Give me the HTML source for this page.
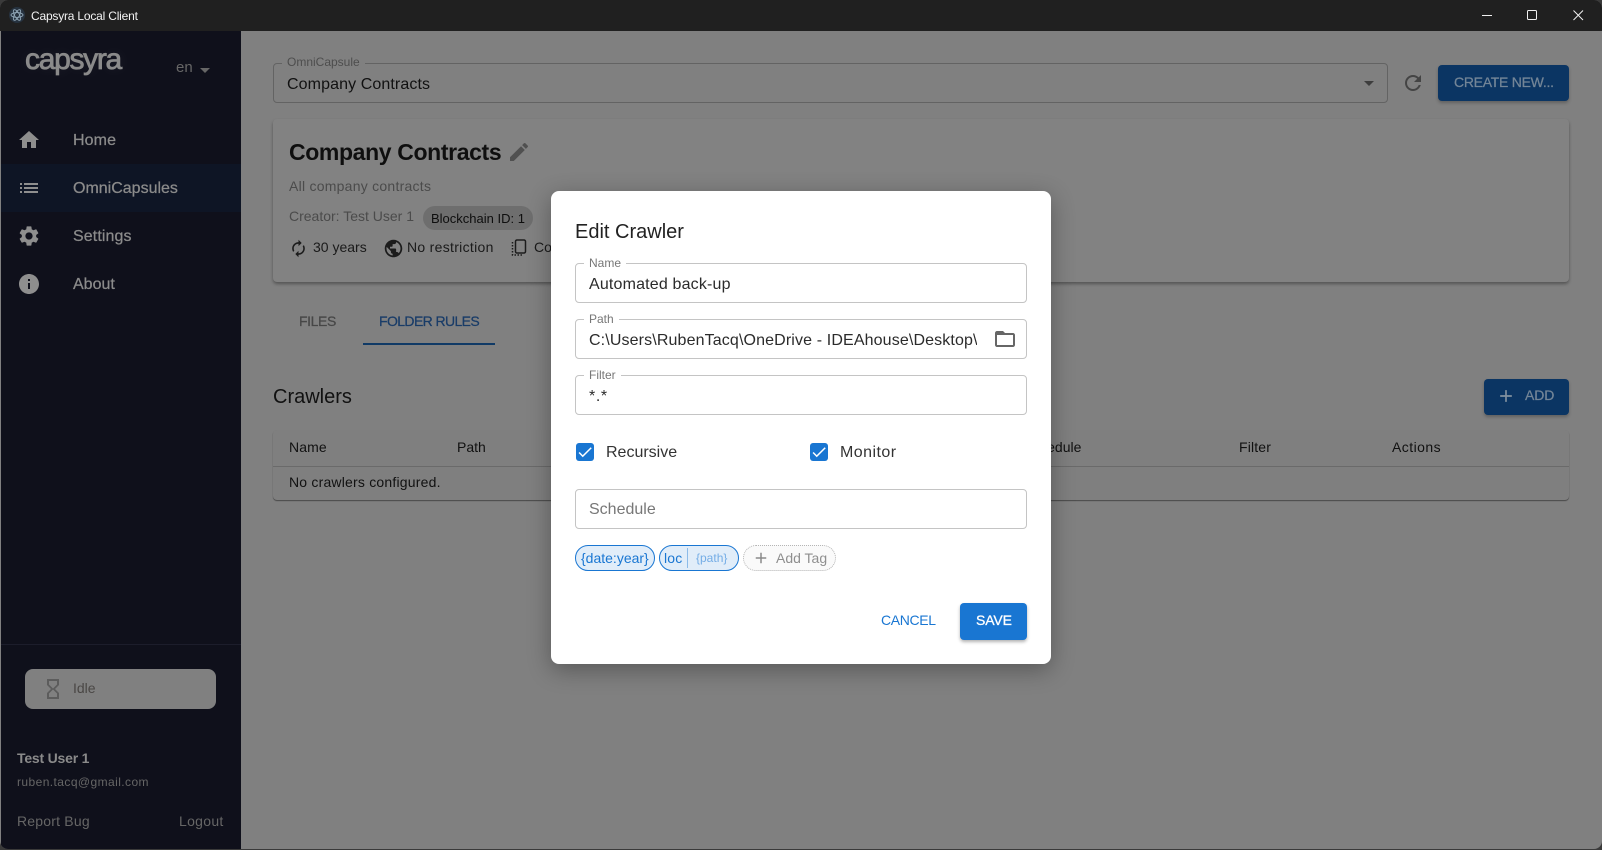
<!DOCTYPE html>
<html lang="en"><head><meta charset="utf-8"><title>Capsyra Local Client</title>
<style>
html,body{margin:0;padding:0;width:1602px;height:850px;overflow:hidden;background:#3a3a3a;font-family:"Liberation Sans",Arial,sans-serif}
#win{position:absolute;left:0;top:0;width:1602px;height:849px;background:#808080;border-radius:8px;overflow:hidden}
.a{position:absolute;white-space:nowrap;line-height:1}
.m{-webkit-text-stroke:.25px currentColor}
svg{position:absolute;display:block}
.box{position:absolute;box-sizing:border-box;border-radius:4px}
.lab{position:absolute;background:#fff;padding:0 5px;font-size:12px;line-height:14px;color:#777;white-space:nowrap}
.fld{left:575px;width:452px;height:40px;border:1px solid #c4c4c4;background:#fff}
</style></head><body>
<div id="win">
<!-- titlebar -->
<div class="box" style="left:0;top:0;width:1602px;height:31px;background:#202020;border-radius:0"></div>
<div class="box" style="left:9px;top:7px;width:16px;height:16px;border-radius:50%;background:#26323f"></div>
<svg style="left:10px;top:8px" width="14" height="14" viewBox="0 0 14 14" fill="none" stroke="#8fa5b5" stroke-width=".9"><ellipse cx="7" cy="7" rx="6" ry="2.4"/><ellipse cx="7" cy="7" rx="6" ry="2.4" transform="rotate(60 7 7)"/><ellipse cx="7" cy="7" rx="6" ry="2.4" transform="rotate(120 7 7)"/></svg>
<div class="a" style="left:31px;top:10px;font-size:12px;color:#f2f2f2;letter-spacing:-.2px">Capsyra Local Client</div>
<svg style="left:1475px;top:5px" width="120" height="20" viewBox="0 0 120 20" fill="none" stroke="#f0f0f0" stroke-width="1"><path d="M7 10.5h10"/><rect x="52.5" y="5.5" width="9" height="9" rx="1"/><path d="M98.5 5.5l9.5 9.5M108 5.5l-9.5 9.500"/></svg>

<!-- sidebar -->
<div class="box" style="left:1px;top:31px;width:240px;height:818px;background:#0f101b;border-radius:0"></div>
<div class="box" style="left:1px;top:164px;width:240px;height:48px;background:#0e1525;border-radius:0"></div>
<div class="box" style="left:1px;top:644px;width:240px;height:1px;background:#1c1d2b;border-radius:0"></div>
<div class="a" style="left:25px;top:45px;font-size:30px;color:#8a8a8a;letter-spacing:-1.3px;-webkit-text-stroke:.8px #8a8a8a;text-shadow:0 0 14px rgba(255,255,255,.1)">capsyra</div>
<div class="a" style="left:176px;top:60px;font-size:15px;color:#666">en</div>
<svg style="left:200px;top:68px" width="10" height="5" viewBox="0 0 10 5"><path d="M0 0h10L5 5z" fill="#666"/></svg>

<svg style="left:17px;top:128px" width="24" height="24" viewBox="0 0 24 24" fill="#8e8e8e"><path d="M10 20v-6h4v6h5v-8h3L12 3 2 12h3v8z"/></svg>
<svg style="left:17px;top:176px" width="24" height="24" viewBox="0 0 24 24" fill="#8e8e8e"><path d="M3 13h2v-2H3v2zm0 4h2v-2H3v2zm0-8h2V7H3v2zm4 4h14v-2H7v2zm0 4h14v-2H7v2zM7 7v2h14V7H7z"/></svg>
<svg style="left:17px;top:224px" width="24" height="24" viewBox="0 0 24 24" fill="#8e8e8e"><path d="M19.14,12.94c0.04-0.3,0.06-0.61,0.06-0.94c0-0.32-0.02-0.64-0.07-0.94l2.03-1.58c0.18-0.14,0.23-0.41,0.12-0.61l-1.92-3.32c-0.12-0.22-0.37-0.29-0.59-0.22l-2.39,0.96c-0.5-0.38-1.03-0.7-1.62-0.94L14.4,2.81c-0.04-0.24-0.24-0.41-0.48-0.41h-3.84c-0.24,0-0.43,0.17-0.47,0.41L9.25,5.35C8.66,5.59,8.12,5.92,7.63,6.29L5.24,5.33c-0.22-0.08-0.47,0-0.59,0.22L2.74,8.87C2.62,9.08,2.66,9.34,2.86,9.48l2.03,1.58C4.84,11.36,4.8,11.69,4.8,12s0.02,0.64,0.07,0.94l-2.03,1.58c-0.18,0.14-0.23,0.41-0.12,0.61l1.92,3.32c0.12,0.22,0.37,0.29,0.59,0.22l2.39-0.96c0.5,0.38,1.03,0.7,1.62,0.94l0.36,2.54c0.05,0.24,0.24,0.41,0.48,0.41h3.84c0.24,0,0.44-0.17,0.47-0.41l0.36-2.54c0.59-0.24,1.13-0.56,1.62-0.94l2.39,0.96c0.22,0.08,0.47,0,0.59-0.22l1.92-3.32c0.12-0.22,0.07-0.47-0.12-0.61L19.14,12.94z M12,15.6c-1.98,0-3.6-1.62-3.6-3.6s1.62-3.6,3.6-3.6s3.6,1.62,3.6,3.6S13.98,15.6,12,15.6z"/></svg>
<svg style="left:17px;top:272px" width="24" height="24" viewBox="0 0 24 24" fill="#8e8e8e"><path d="M12 2C6.48 2 2 6.48 2 12s4.48 10 10 10 10-4.48 10-10S17.52 2 12 2zm1 15h-2v-6h2v6zm0-8h-2V7h2v2z"/></svg>
<div class="a m" style="left:73px;top:133px;font-size:16px;color:#8b8b8b;letter-spacing:.1px">Home</div>
<div class="a m" style="left:73px;top:181px;font-size:16px;color:#8b8b8b">OmniCapsules</div>
<div class="a m" style="left:73px;top:229px;font-size:16px;color:#8b8b8b;letter-spacing:.1px">Settings</div>
<div class="a m" style="left:73px;top:277px;font-size:16px;color:#8b8b8b">About</div>

<div class="box" style="left:25px;top:669px;width:191px;height:40px;background:#808080;border-radius:8px"></div>
<svg style="left:41px;top:677px" width="24" height="24" viewBox="0 0 24 24" fill="#5c5c5c"><path d="M6 2v6h.01L6 8.01 10 12l-4 4 .01.01H6V22h12v-5.99h-.01L18 16l-4-4 4-3.99-.01-.01H18V2H6zm10 14.5V20H8v-3.500l4-4 4 4zm-4-5l-4-4V4h8v3.500l-4 4z"/></svg>
<div class="a" style="left:73px;top:681px;font-size:14px;color:#4a4745">Idle</div>
<div class="a" style="left:17px;top:751px;font-size:14px;font-weight:bold;color:#8a8a8a;letter-spacing:-.2px">Test User 1</div>
<div class="a" style="left:17px;top:776px;font-size:12px;color:#666;letter-spacing:.42px">ruben.tacq@gmail.com</div>
<div class="a" style="left:17px;top:814px;font-size:14px;color:#666;letter-spacing:.2px">Report Bug</div>
<div class="a" style="left:179px;top:814px;font-size:14px;color:#666;letter-spacing:.3px">Logout</div>

<!-- main -->
<div class="box" style="left:273px;top:63px;width:1115px;height:40px;border:1px solid #636363"></div>
<div class="a" style="left:282px;top:56px;background:#808080;padding:0 5px;font-size:12px;color:#4d4d4d">OmniCapsule</div>
<div class="a" style="left:287px;top:77px;font-size:16px;color:#111;letter-spacing:.1px">Company Contracts</div>
<svg style="left:1364px;top:81px" width="10" height="5" viewBox="0 0 10 5"><path d="M0 0h10L5 5z" fill="#3d3d3d"/></svg>
<svg style="left:1401px;top:71px" width="24" height="24" viewBox="0 0 24 24" fill="#444"><path d="M17.65 6.35C16.2 4.9 14.21 4 12 4c-4.420 0-7.990 3.580-7.990 8s3.570 8 7.990 8c3.730 0 6.840-2.550 7.730-6h-2.080c-.82 2.330-3.040 4-5.650 4-3.310 0-6-2.690-6-6s2.690-6 6-6c1.660 0 3.140.69 4.220 1.780L13 11h7V4l-2.350 2.350z"/></svg>
<div class="box" style="left:1438px;top:65px;width:131px;height:36px;background:#0b3563;box-shadow:0 2px 3px rgba(0,0,0,.25)"></div>
<div class="a m" style="left:1454px;top:75px;font-size:14px;color:#738597;letter-spacing:-.27px">CREATE NEW...</div>

<div class="box" style="left:273px;top:119px;width:1296px;height:163px;background:#828282;box-shadow:0 2px 3px rgba(0,0,0,.35)"></div>
<div class="a" style="left:289px;top:141px;font-size:23px;font-weight:bold;color:#0f0f0f;letter-spacing:-.37px">Company Contracts</div>
<svg style="left:507px;top:140px" width="24" height="24" viewBox="0 0 24 24" fill="#505050"><path d="M3 17.250V21h3.750L17.810 9.940l-3.750-3.750L3 17.250zM20.710 7.040c.39-.39.39-1.020 0-1.410l-2.340-2.340c-.39-.39-1.020-.39-1.410 0l-1.830 1.830 3.750 3.750 1.830-1.830z"/></svg>
<div class="a" style="left:289px;top:179px;font-size:14px;color:#4b4b4b;letter-spacing:.25px">All company contracts</div>
<div class="a" style="left:289px;top:209px;font-size:14px;color:#4b4b4b">Creator: Test User 1</div>
<div class="box" style="left:423px;top:206px;width:110px;height:24px;background:#6e6e6e;border-radius:12px"></div>
<div class="a" style="left:431px;top:212px;font-size:13px;color:#0e0e0e">Blockchain ID: 1</div>
<svg style="left:289px;top:239px" width="19" height="19" viewBox="0 0 24 24" fill="#1c1c1c"><path d="M12 6v3l4-4-4-4v3c-4.420 0-8 3.580-8 8 0 1.570.46 3.030 1.240 4.260L6.700 14.800c-.45-.83-.7-1.790-.7-2.800 0-3.310 2.690-6 6-6zm6.760 1.740L17.300 9.200c.44.84.7 1.790.7 2.800 0 3.310-2.690 6-6 6v-3l-4 4 4 4v-3c4.420 0 8-3.580 8-8 0-1.570-.46-3.030-1.240-4.260z"/></svg>
<div class="a" style="left:313px;top:240px;font-size:14px;color:#1a1a1a">30 years</div>
<svg style="left:383px;top:238px" width="21" height="21" viewBox="0 0 24 24" fill="#1c1c1c"><path d="M12 2C6.480 2 2 6.480 2 12s4.480 10 10 10 10-4.480 10-10S17.520 2 12 2zm-1 17.930c-3.950-.49-7-3.850-7-7.930 0-.62.08-1.210.21-1.790L9 15v1c0 1.100.9 2 2 2v1.930zm6.900-2.540c-.26-.81-1-1.390-1.900-1.390h-1v-3c0-.55-.45-1-1-1H8v-2h2c.55 0 1-.45 1-1V7h2c1.100 0 2-.9 2-2v-.41c2.930 1.190 5 4.060 5 7.410 0 2.080-.8 3.970-2.100 5.390z"/></svg>
<div class="a" style="left:407px;top:240px;font-size:14px;color:#1a1a1a;letter-spacing:.3px">No restriction</div>
<svg style="left:511px;top:239px" width="17" height="18" viewBox="0 0 17 18" fill="none"><rect x="4.500" y="1" width="10" height="13" rx="1.500" stroke="#1c1c1c" stroke-width="1.500"/><path d="M1.500 3v13h11" stroke="#1c1c1c" stroke-width="1.500" stroke-dasharray="1.500 1.500"/></svg>
<div class="a" style="left:534px;top:240px;font-size:14px;color:#1a1a1a">Copies</div>

<div class="a m" style="left:299px;top:314px;font-size:14px;color:#474747;letter-spacing:-.4px">FILES</div>
<div class="a m" style="left:379px;top:314px;font-size:14px;color:#193c68;letter-spacing:-.6px">FOLDER RULES</div>
<div class="box" style="left:363px;top:343px;width:132px;height:2px;background:#103a66;border-radius:0"></div>
<div class="a" style="left:273px;top:387px;font-size:20px;color:#111">Crawlers</div>
<div class="box" style="left:1484px;top:379px;width:85px;height:36px;background:#0b3563;box-shadow:0 2px 3px rgba(0,0,0,.25)"></div>
<svg style="left:1496px;top:386px" width="20" height="20" viewBox="0 0 24 24" fill="#8291a0"><path d="M19 13h-6v6h-2v-6H5v-2h6V5h2v6h6v2z"/></svg>
<div class="a m" style="left:1525px;top:388px;font-size:14px;color:#738597;letter-spacing:-.1px">ADD</div>

<div class="box" style="left:273px;top:430px;width:1296px;height:70px;background:#7f7f7f;box-shadow:0 1px 1px rgba(0,0,0,.45)"></div>
<div class="box" style="left:273px;top:466px;width:1296px;height:1px;background:#6a6a6a;border-radius:0"></div>
<div class="a" style="left:289px;top:440px;font-size:14px;color:#111;letter-spacing:.1px">Name</div>
<div class="a" style="left:457px;top:440px;font-size:14px;color:#111">Path</div>
<div class="a" style="left:1023px;top:440px;font-size:14px;color:#111">Schedule</div>
<div class="a" style="left:1239px;top:440px;font-size:14px;color:#111;letter-spacing:.15px">Filter</div>
<div class="a" style="left:1392px;top:440px;font-size:14px;color:#111;letter-spacing:.45px">Actions</div>
<div class="a" style="left:289px;top:475px;font-size:14px;color:#111;letter-spacing:.2px">No crawlers configured.</div>

<!-- dialog -->
<div class="box" style="left:551px;top:191px;width:500px;height:473px;background:#fff;border-radius:8px;box-shadow:0 6px 24px rgba(0,0,0,.32)"></div>
<div class="a" style="left:575px;top:222px;font-size:20px;color:#222">Edit Crawler</div>

<div class="box fld" style="top:263px"></div>
<div class="lab" style="left:584px;top:256px">Name</div>
<div class="a" style="left:589px;top:277px;font-size:16px;color:#2b2b2b;letter-spacing:.17px">Automated back-up</div>

<div class="box fld" style="top:319px"></div>
<div class="lab" style="left:584px;top:312px">Path</div>
<div class="a" style="left:589px;top:333px;width:388px;overflow:hidden;font-size:16px;color:#2b2b2b;letter-spacing:.13px">C:\Users\RubenTacq\OneDrive - IDEAhouse\Desktop\</div>
<svg style="left:993px;top:327px" width="24" height="24" viewBox="0 0 24 24" fill="#666"><path d="M20 6h-8l-2-2H4c-1.100 0-1.990.9-1.990 2L2 18c0 1.100.9 2 2 2h16c1.100 0 2-.9 2-2V8c0-1.100-.9-2-2-2zm0 12H4V8h16v10z"/></svg>

<div class="box fld" style="top:375px"></div>
<div class="lab" style="left:584px;top:368px">Filter</div>
<div class="a" style="left:589px;top:389px;font-size:16px;color:#2b2b2b;letter-spacing:.6px">*.*</div>

<div class="box" style="left:576px;top:443px;width:18px;height:18px;background:#1976d2;border-radius:3px"></div>
<svg style="left:576px;top:443px" width="18" height="18" viewBox="0 0 24 24" fill="#fff"><path d="M9 16.170L4.830 12l-1.420 1.410L9 19 21 7l-1.410-1.410z"/></svg>
<div class="a" style="left:606px;top:445px;font-size:16px;color:#333">Recursive</div>
<div class="box" style="left:810px;top:443px;width:18px;height:18px;background:#1976d2;border-radius:3px"></div>
<svg style="left:810px;top:443px" width="18" height="18" viewBox="0 0 24 24" fill="#fff"><path d="M9 16.170L4.830 12l-1.420 1.410L9 19 21 7l-1.410-1.410z"/></svg>
<div class="a" style="left:840px;top:445px;font-size:16px;color:#333;letter-spacing:.45px">Monitor</div>

<div class="box fld" style="top:489px"></div>
<div class="a" style="left:589px;top:502px;font-size:16px;color:#777">Schedule</div>

<div class="box" style="left:575px;top:545px;width:80px;height:26px;background:#e1edf9;border:1px solid #1976d2;border-radius:13px"></div>
<div class="a" style="left:581px;top:551px;font-size:14px;color:#1976d2">{date:year}</div>
<div class="box" style="left:659px;top:545px;width:80px;height:26px;background:#e1edf9;border:1px solid #1976d2;border-radius:13px"></div>
<div class="a" style="left:664px;top:551px;font-size:14px;color:#1976d2;letter-spacing:.2px">loc</div>
<div class="box" style="left:687px;top:548px;width:1px;height:20px;background:#8cbbe9;border-radius:0"></div>
<div class="a" style="left:696px;top:552px;font-size:12px;color:#74ade6">{path}</div>
<div class="box" style="left:743px;top:545px;width:93px;height:26px;background:#fafafa;border:1px dotted #b5b5b5;border-radius:13px"></div>
<svg style="left:752px;top:549px" width="18" height="18" viewBox="0 0 24 24" fill="#8a8a8a"><path d="M19 13h-6v6h-2v-6H5v-2h6V5h2v6h6v2z"/></svg>
<div class="a" style="left:776px;top:551px;font-size:14px;color:#8f8f8f">Add Tag</div>

<div class="a" style="left:881px;top:613px;font-size:14px;color:#1976d2;letter-spacing:-.35px">CANCEL</div>
<div class="box" style="left:960px;top:603px;width:67px;height:37px;background:#1976d2;box-shadow:0 2px 3px rgba(0,0,0,.3)"></div>
<div class="a" style="left:976px;top:613px;font-size:14px;color:#fff;-webkit-text-stroke:.3px #fff;letter-spacing:-.1px">SAVE</div>
</div>
</body></html>
